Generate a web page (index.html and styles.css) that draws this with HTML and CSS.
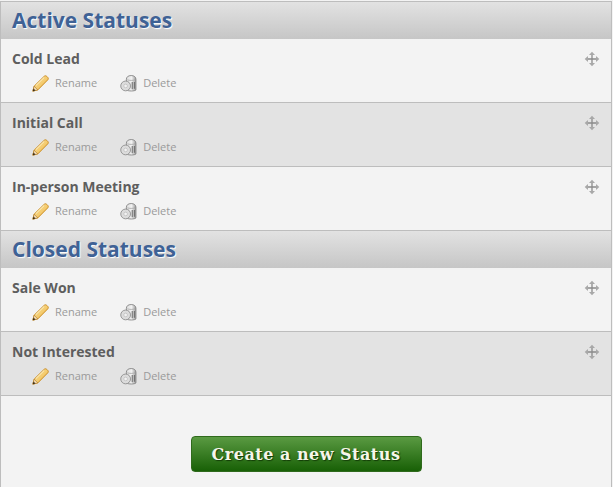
FILE: index.html
```html
<!DOCTYPE html>
<html lang="en">
<head>
<meta charset="utf-8">
<title>Statuses</title>
<link rel="stylesheet" href="styles.css">
</head>
<body>
<svg class="defs" width="0" height="0" aria-hidden="true">
  <defs>
    <linearGradient id="pencil" x1="0" y1="0" x2="1" y2="1">
      <stop offset="0" stop-color="#fbe6a0"/><stop offset="1" stop-color="#eeb445"/>
    </linearGradient>
    <linearGradient id="can" x1="0" y1="0" x2="1" y2="0">
      <stop offset="0" stop-color="#dcdcdc"/><stop offset="0.55" stop-color="#f2f2f2"/><stop offset="1" stop-color="#9a9a9a"/>
    </linearGradient>
    <symbol id="i-pencil" viewBox="0 0 16 16">
      <path d="M.8 15.200l1.200-4.700L11.400 1.300c.9-.8 1.800-.7 2.500 0l.9.9c.7.800.7 1.600 0 2.400L5.500 14z" fill="url(#pencil)" stroke="#c98a20" stroke-width=".9"/>
      <path d="M3.600 10l7.800-7.700" stroke="#fff6d0" stroke-width=".9" fill="none"/>
      <path d="M.8 15.200l1.200-4.700 3.500 3.500z" fill="#f0d8b0" stroke="#a87420" stroke-width=".5"/>
      <path d="M.8 15.200l.6-2.500 1.900 1.900z" fill="#3a2c18"/>
    </symbol>
    <symbol id="i-delete" viewBox="0 0 16 16">
      <path d="M6 4c0-2 1.600-3.500 4.500-3.500S15 2 15 4v10c-1 1.400-7.500 1.400-9 0z" fill="url(#can)" stroke="#808080" stroke-width=".8"/>
      <path d="M7 4.500c1.500.8 5.500.8 7 0" fill="none" stroke="#a0a0a0" stroke-width=".7"/>
      <path d="M11.500 6.500v7M13.500 6.500v6.500" stroke="#6a6a6a" stroke-width="1"/>
      <circle cx="5.300" cy="10.300" r="4.600" fill="#dcdcdc" stroke="#8a8a8a" stroke-width=".8"/>
      <circle cx="5.300" cy="10.300" r="1.700" fill="#f2f2f2" stroke="#b0b0b0" stroke-width=".5"/>
    </symbol>
    <symbol id="i-move" viewBox="0 0 16 16">
      <path d="M8 3v10M3 8h10" stroke="#8a8a8a" stroke-width="1.300" fill="none"/>
      <path d="M8 .7l3 3.300H5zM8 15.300l3-3.300H5zM.7 8L4 5v6zM15.300 8L12 5v6z" fill="#a8a8a8"/>
    </symbol>
  </defs>
</svg>
<main class="panel">
  <h2 class="section-title">Active Statuses</h2>
  <article class="status">
    <div class="status-head"><h3 class="status-name">Cold Lead</h3><svg class="move"><use href="#i-move"/></svg></div>
    <div class="actions">
      <a class="action"><svg class="icon"><use href="#i-pencil"/></svg>Rename</a>
      <a class="action"><svg class="icon"><use href="#i-delete"/></svg>Delete</a>
    </div>
  </article>
  <article class="status alt">
    <div class="status-head"><h3 class="status-name">Initial Call</h3><svg class="move"><use href="#i-move"/></svg></div>
    <div class="actions">
      <a class="action"><svg class="icon"><use href="#i-pencil"/></svg>Rename</a>
      <a class="action"><svg class="icon"><use href="#i-delete"/></svg>Delete</a>
    </div>
  </article>
  <article class="status">
    <div class="status-head"><h3 class="status-name">In-person Meeting</h3><svg class="move"><use href="#i-move"/></svg></div>
    <div class="actions">
      <a class="action"><svg class="icon"><use href="#i-pencil"/></svg>Rename</a>
      <a class="action"><svg class="icon"><use href="#i-delete"/></svg>Delete</a>
    </div>
  </article>
  <h2 class="section-title">Closed Statuses</h2>
  <article class="status">
    <div class="status-head"><h3 class="status-name">Sale Won</h3><svg class="move"><use href="#i-move"/></svg></div>
    <div class="actions">
      <a class="action"><svg class="icon"><use href="#i-pencil"/></svg>Rename</a>
      <a class="action"><svg class="icon"><use href="#i-delete"/></svg>Delete</a>
    </div>
  </article>
  <article class="status alt">
    <div class="status-head"><h3 class="status-name">Not Interested</h3><svg class="move"><use href="#i-move"/></svg></div>
    <div class="actions">
      <a class="action"><svg class="icon"><use href="#i-pencil"/></svg>Rename</a>
      <a class="action"><svg class="icon"><use href="#i-delete"/></svg>Delete</a>
    </div>
  </article>
  <div class="footer"><button class="create" type="button">Create a new Status</button></div>
</main>
</body>
</html>
```
FILE: styles.css
```css
html, body {
  margin: 0;
  height: 487px;
  overflow: hidden;
  background: #f3f3f3;
}
.defs { position: absolute; }
.panel {
  box-sizing: border-box;
  width: 613px;
  height: 487px;
  margin: 0;
  padding-top: 1px;
  padding-right: 1px;
  font-family: "Open Sans", sans-serif;
}
.section-title {
  box-sizing: border-box;
  height: 38px;
  margin: 0;
  padding: 4px 0 0 11px;
  border-top: 1px solid #bdbdbd;
  border-left: 1px solid #bdbdbd;
  border-right: 1px solid #bdbdbd;
  background: linear-gradient(#e2e2e2, #c6c6c6);
  color: #3f6295;
  font-size: 21px;
  line-height: 29px;
  font-weight: 700;
  text-shadow: 1px 1px 1px #fff;
}
.status + .section-title {
  height: 37px;
  padding-top: 4px;
  border-top: 0;
}
.status {
  box-sizing: border-box;
  height: 64px;
  padding: 10px 11px 0 11px;
  border-left: 1px solid #bdbdbd;
  border-right: 1px solid #bdbdbd;
  border-bottom: 1px solid #bdbdbd;
  background: #f3f3f3;
}
.status.alt { background: #e3e3e3; }
.status-head {
  display: flex;
  justify-content: space-between;
  align-items: flex-start;
}
.status-name {
  margin: 0;
  color: #5e5e5e;
  font-size: 14px;
  line-height: 20px;
  font-weight: 700;
}
.move {
  width: 16px;
  height: 16px;
  margin-top: 2px;
  margin-bottom: -1px;
}
.actions {
  display: flex;
  gap: 23px;
  margin-top: 5px;
  padding-left: 20px;
}
.action {
  display: flex;
  align-items: center;
  gap: 6px;
  color: #9a9a9a;
  font-size: 11px;
  line-height: 18px;
}
.icon { width: 17px; height: 17px; }
.footer {
  box-sizing: border-box;
  display: flex;
  justify-content: center;
  align-items: flex-start;
  height: 91px;
  padding-top: 40px;
  border-left: 1px solid #bdbdbd;
  border-right: 1px solid #bdbdbd;
}
.create {
  box-sizing: border-box;
  width: 231px;
  height: 36px;
  padding: 0;
  border: 1px solid #2f6a1c;
  border-radius: 4px;
  background: linear-gradient(#5a9a42, #186006);
  color: #f6f6ea;
  font-family: "DejaVu Serif", serif;
  font-size: 16px;
  font-weight: 700;
  letter-spacing: .5px;
  text-shadow: 1px 1px 1px #123c06;
}
```
